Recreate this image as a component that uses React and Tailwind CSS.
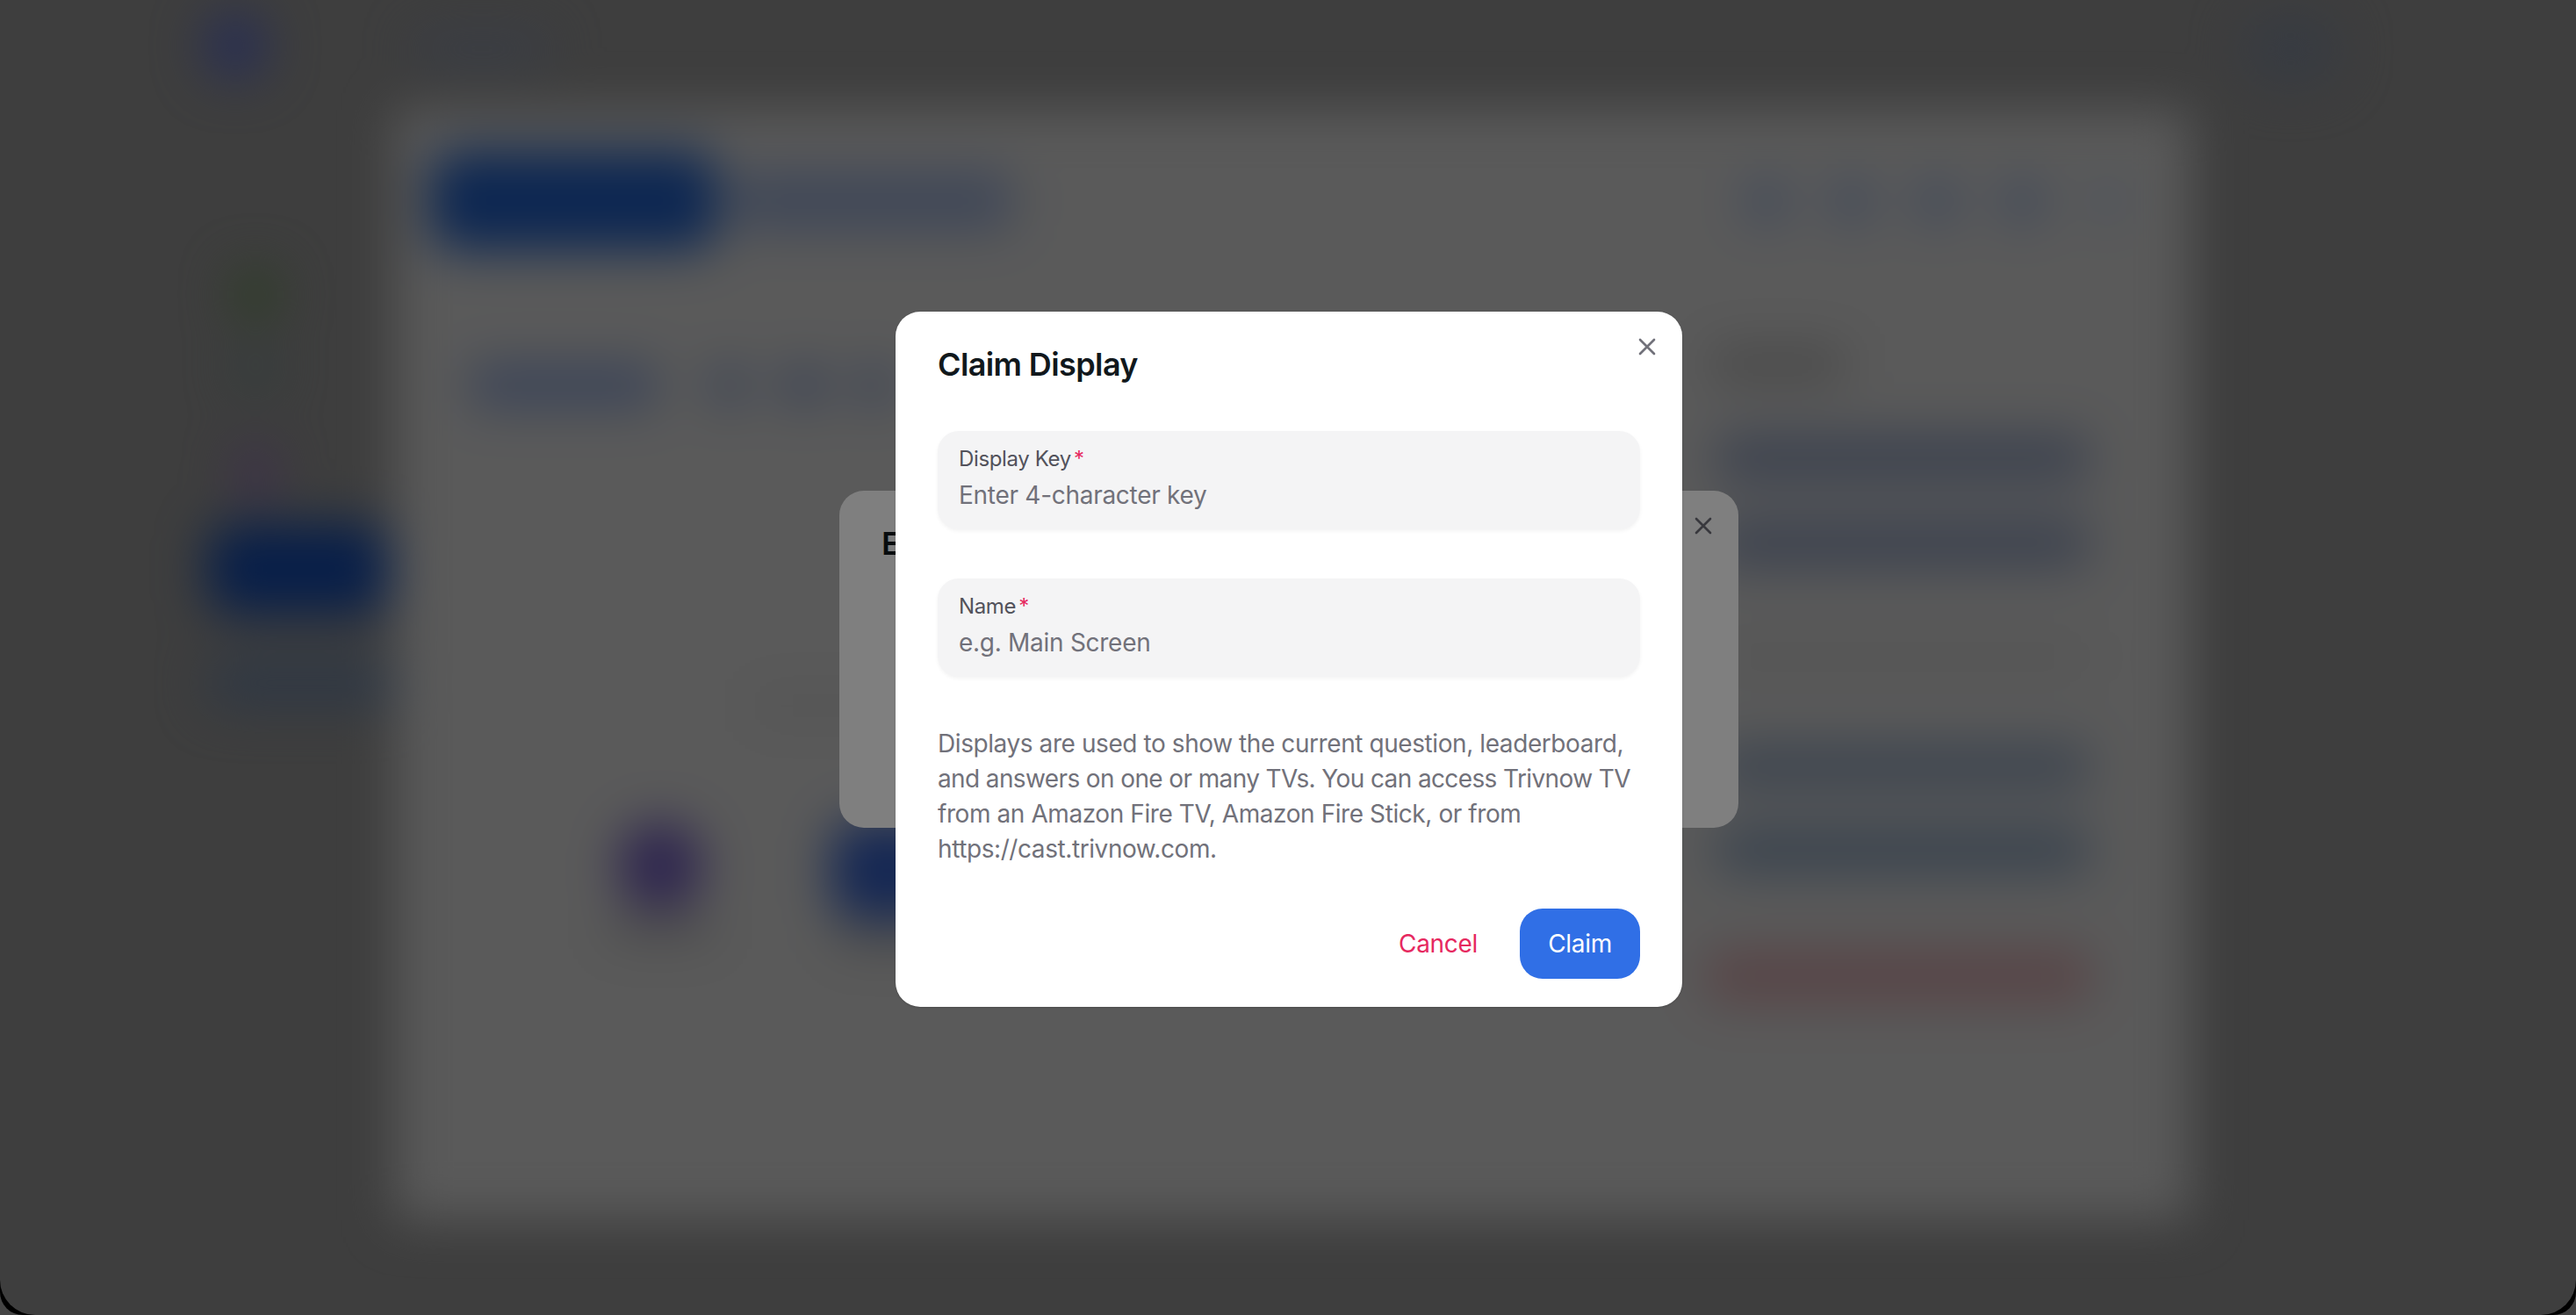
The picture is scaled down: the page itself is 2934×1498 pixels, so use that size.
import React from "react";

function CloseIcon({ className }) {
  return (
    <svg className={className} viewBox="0 0 24 24" fill="none" stroke="currentColor" strokeWidth="2" strokeLinecap="round" strokeLinejoin="round">
      <path d="M18 6L6 18M6 6l12 12" />
    </svg>
  );
}

function BlurredPage() {
  return (
    <div className="flex h-full flex-col blur-[28px]">
      <header className="flex h-[125px] shrink-0 items-start">
        <div className="ml-[232px] mt-[14px] h-[76px] w-[72px] rounded-full bg-[#4f5ca8]" />
        <div className="ml-[170px] mt-[42px] h-[24px] w-[150px] rounded bg-[#6e7a94]" />
        <div className="ml-auto mr-[270px] mt-[16px] h-[80px] w-[110px] rounded-full bg-[#6e7684]" />
      </header>
      <div className="flex min-h-0 flex-1">
        <aside className="flex w-[450px] shrink-0 flex-col items-start pl-[237px] pt-[180px]">
          <div className="ml-[28px] h-[60px] w-[52px] rounded-full bg-[#5a7a4c]" />
          <div className="ml-[32px] mt-[36px] h-[40px] w-[44px] rounded-full bg-[#5f7a78]" />
          <div className="ml-[32px] mt-[67px] h-[60px] w-[44px] rounded-full bg-[#7a5e98]" />
          <div className="mt-[29px] h-[102px] w-[205px] rounded-[28px] bg-[#0f3d92]" />
          <div className="mt-[54px] h-[50px] w-[213px] rounded-[20px] bg-[#5c6f8a]" />
        </aside>
        <main className="mb-[108px] flex w-[2045px] flex-col bg-[#b4b4b4] pl-[40px] pr-[73px] pt-[47px]">
          <div className="flex items-center">
            <div className="h-[113px] w-[328px] rounded-[32px] bg-[#1a4ea4]" />
            <div className="ml-[16px] h-[66px] w-[320px] rounded-[20px] bg-[#7e8eb0]" />
            <div className="ml-auto flex gap-[53px]">
              <div className="h-[44px] w-[44px] rounded-full bg-[#6c86b4]" />
              <div className="h-[44px] w-[44px] rounded-full bg-[#6c86b4]" />
              <div className="h-[44px] w-[44px] rounded-full bg-[#6c86b4]" />
              <div className="h-[44px] w-[44px] rounded-full bg-[#6c86b4]" />
              <div className="h-[44px] w-[44px] rounded-full bg-[#98a6bc]" />
            </div>
          </div>
          <div className="flex min-h-0 flex-1 pr-[42px]">
            <div className="flex flex-1 flex-col">
              <div className="ml-[45px] mt-[129px] flex items-center">
                <div className="h-[50px] w-[215px] rounded-xl bg-[#7688b0]" />
                <div className="ml-[60px] h-[44px] w-[40px] rounded-full bg-[#647aa8]" />
                <div className="ml-[45px] h-[44px] w-[40px] rounded-full bg-[#566ea4]" />
                <div className="ml-[40px] h-[44px] w-[40px] rounded-full bg-[#647aa8]" />
              </div>
              <div className="ml-[367px] mt-[325px] h-[30px] w-[150px] rounded bg-[#a8a8a8]" />
              <div className="ml-[207px] mt-[117px] flex gap-[130px]">
                <div className="flex w-[110px] flex-col items-center">
                  <div className="h-[100px] w-[96px] rounded-full bg-[#5c4a9e]" />
                  <div className="mt-[10px] h-[24px] w-[120px] rounded bg-[#929292]" />
                </div>
                <div className="flex w-[150px] flex-col items-center">
                  <div className="h-[110px] w-[130px] rounded-[28px] bg-[#2a4fa8]" />
                  <div className="mt-[10px] h-[24px] w-[120px] rounded bg-[#929292]" />
                </div>
              </div>
            </div>
            <div className="flex w-[426px] shrink-0 flex-col">
              <div className="ml-[-4px] mt-[112px] h-[36px] w-[150px] rounded bg-[#8e8e8e]" />
              <div className="mt-[62px] h-[54px] w-[426px] rounded-[20px] bg-[#78849e]" />
              <div className="mt-[42px] h-[55px] w-[426px] rounded-[20px] bg-[#78849e]" />
              <div className="mt-[72px] h-[60px] w-[426px] rounded-[20px] bg-[#adadad]" />
              <div className="mt-[70px] h-[50px] w-[426px] rounded-[20px] bg-[#78889e]" />
              <div className="mt-[45px] h-[50px] w-[426px] rounded-[20px] bg-[#70849c]" />
              <div className="ml-[-12px] mt-[88px] h-[62px] w-[440px] rounded-[20px] bg-[#b08a8e]" />
            </div>
          </div>
        </main>
      </div>
    </div>
  );
}

function Field({ label, placeholder }) {
  return (
    <div className="flex h-[112px] flex-col rounded-[24px] bg-[#f4f4f5] px-[24px] pt-[16px] shadow-[0_2px_4px_rgba(0,0,0,0.05)]">
      <label className="text-[24px] font-normal leading-[32px] tracking-[-0.015em] text-[#52525b]">
        {label}
        <span className="ml-[3px] text-[#e6295f]">*</span>
      </label>
      <input
        placeholder={placeholder}
        className="mt-[5px] h-[40px] bg-transparent text-[28px] leading-[40px] tracking-[-0.01em] outline-none placeholder:text-[#71717a]"
      />
    </div>
  );
}

export default function App() {
  return (
    <div className="relative h-screen w-full overflow-hidden bg-[#8a8a8a] [font-family:Inter,sans-serif]">
      <div className="h-full rounded-b-[26px] bg-black">
        <div className="h-full overflow-hidden rounded-b-[40px] bg-[#7c7c7c]">
          <BlurredPage />
        </div>
      </div>

      <div className="absolute inset-0 flex items-center justify-center pl-[2px] pt-[4px]">
        <section className="relative h-[384px] w-[1024px] rounded-[28px] bg-white px-[48px] py-[32px]">
          <h2 className="text-[36px] font-semibold leading-[56px] tracking-[-0.017em] text-[#11181c]">Edit Display</h2>
          <button className="absolute right-[24px] top-[24px] text-[#71717a]">
            <CloseIcon className="h-[32px] w-[32px]" />
          </button>
        </section>
      </div>

      <div className="absolute inset-0 flex items-center justify-center bg-black/50 pl-[2px] pt-[4px]">
        <section className="relative w-[896px] rounded-[28px] bg-white shadow-sm">
          <button className="absolute right-[24px] top-[24px] text-[#71717a]">
            <CloseIcon className="h-[32px] w-[32px]" />
          </button>
          <h2 className="px-[48px] py-[32px] text-[36px] font-semibold leading-[56px] tracking-[-0.017em] text-[#11181c]">Claim Display</h2>
          <div className="flex flex-col gap-[56px] px-[48px] py-[16px]">
            <Field label="Display Key" placeholder="Enter 4-character key" />
            <Field label="Name" placeholder="e.g. Main Screen" />
            <p className="whitespace-nowrap text-[28px] leading-[40px] tracking-[-0.015em] text-[#71717a]">
              Displays are used to show the current question, leaderboard,
              <br />
              <span className="tracking-[-0.022em]">and answers on one or many TVs. You can access Trivnow TV</span>
              <br />
              from an Amazon Fire TV, Amazon Fire Stick, or from
              <br />
              https://cast.trivnow.com.
            </p>
          </div>
          <footer className="flex justify-end gap-[16px] px-[48px] py-[32px]">
            <button className="h-[80px] rounded-[26px] px-[32px] text-[28px] tracking-[-0.01em] text-[#e6295f]">Cancel</button>
            <button className="h-[80px] rounded-[26px] bg-[#306fe6] px-[32px] text-[28px] tracking-[-0.01em] text-white">Claim</button>
          </footer>
        </section>
      </div>
    </div>
  );
}
